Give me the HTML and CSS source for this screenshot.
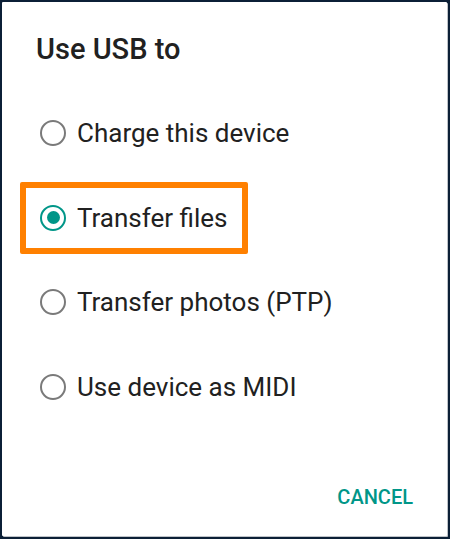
FILE: index.html
```html
<!DOCTYPE html>
<html>
<head>
<meta charset="utf-8">
<link rel="stylesheet" href="styles.css">
</head>
<body>
<div class="dialog">
  <h1 class="title">Use USB to</h1>
  <ul class="options">
    <li class="option"><span class="radio"></span><span class="label">Charge this device</span></li>
    <li class="option"><span class="highlight"><span class="radio checked"></span><span class="label">Transfer files</span></span></li>
    <li class="option"><span class="radio"></span><span class="label">Transfer photos (PTP)</span></li>
    <li class="option"><span class="radio"></span><span class="label">Use device as MIDI</span></li>
  </ul>
  <div class="actions"><span class="btn">CANCEL</span></div>
</div>
</body>
</html>
```
FILE: styles.css
```css
html, body {
  margin: 0;
  padding: 0;
  background: #0b1f36;
}
body {
  font-family: Roboto, "Noto Sans", sans-serif;
  width: 450px;
  height: 539px;
  overflow: hidden;
}
.dialog {
  margin: 2px 0 0 2px;
  width: 445px;
  height: 534px;
  background: #ffffff;
  box-shadow: 1px 1px 0 #bfc3c8;
  border-radius: 1px;
  display: flex;
  flex-direction: column;
  box-sizing: border-box;
  padding-top: 30px;
}
.title {
  margin: 0;
  padding-left: 34px;
  font-size: 29px;
  line-height: 34px;
  font-weight: 500;
  color: #212121;
}
.options {
  list-style: none;
  margin: 25px 0 0 0;
  padding: 0 0 0 38px;
}
.option {
  height: 84.5px;
  display: flex;
  align-items: center;
}
.highlight {
  display: flex;
  align-items: center;
  border: 6px solid #ff8000;
  border-radius: 2px;
  padding: 15px 14px 15px 14px;
  margin-left: -20px;
}
.radio {
  width: 26px;
  height: 26px;
  box-sizing: border-box;
  border: 2.5px solid #7a7a7a;
  border-radius: 50%;
  flex: none;
  position: relative;
}
.radio.checked {
  border-color: #009688;
}
.radio.checked::after {
  content: "";
  position: absolute;
  left: 50%;
  top: 50%;
  width: 13px;
  height: 13px;
  margin: -6.5px 0 0 -6.5px;
  border-radius: 50%;
  background: #009688;
}
.label {
  margin-left: 11px;
  font-size: 26px;
  line-height: 30px;
  color: #212121;
}
.actions {
  margin-top: auto;
  display: flex;
  justify-content: flex-end;
  padding: 0 34px 29px 0;
}
.btn {
  font-size: 20px;
  line-height: 20px;
  font-weight: 500;
  color: #009688;
}
```
